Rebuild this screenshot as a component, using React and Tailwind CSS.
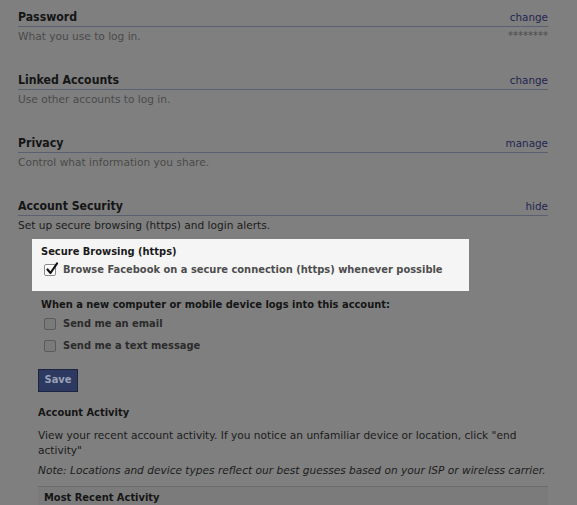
import React from 'react';

const BOLD = { fontFamily: '"DejaVu Sans Condensed", "DejaVu Sans", sans-serif' };

const sections = [
  { title: 'Password', action: 'change', desc: 'What you use to log in.', extra: '********' },
  { title: 'Linked Accounts', action: 'change', desc: 'Use other accounts to log in.' },
  { title: 'Privacy', action: 'manage', desc: 'Control what information you share.' },
];

const SectionHeader = ({ title, action }) => (
  <div className="flex h-[27px] items-end justify-between border-b border-[#5b6070] leading-[18px]">
    <span className="text-[12.2px] font-bold text-[#151515]" style={BOLD}>{title}</span>
    <span className="text-[10.4px] text-[#1f2550]">{action}</span>
  </div>
);

const Box = ({ checked, light }) => (
  <span
    className={`relative inline-block h-[12px] w-[12px] shrink-0 rounded-[2px] border ${
      light ? 'border-[#8a8a8a] bg-[#fdfdfd]' : 'border-[#5a5a5a] bg-[#7a7a7a]'
    }`}
  >
    {checked && (
      <svg viewBox="0 0 14 14" className="absolute left-[0px] top-[-3px] h-[14px] w-[14px]">
        <path d="M2.5 7.5 L5.5 11 L12 1.5" fill="none" stroke="#111" strokeWidth="2.2" strokeLinecap="round" strokeLinejoin="round" />
      </svg>
    )}
  </span>
);

const App = () => {
  return (
    <div
      className="h-[505px] overflow-hidden bg-[#7f7f7f] pl-[18px] pr-[29px] text-[10.6px]"
      style={{ fontFamily: '"DejaVu Sans", sans-serif' }}
    >
      {sections.map((s) => (
        <div key={s.title} className="h-[63px]">
          <SectionHeader title={s.title} action={s.action} />
          <div className="mt-[2px] flex justify-between leading-[14px]">
            <span className="text-[#4a4a4a]">{s.desc}</span>
            {s.extra && <span className="text-[10px] text-[#4a4a4a]">{s.extra}</span>}
          </div>
        </div>
      ))}

      <SectionHeader title="Account Security" action="hide" />
      <div className="mt-[2px] leading-[14px] text-[#1c1c1c]">Set up secure browsing (https) and login alerts.</div>

      <div className="ml-[14px] mt-[7px] h-[52px] w-[437px] bg-[#f5f5f5] pl-[9px] pt-[5px]" style={BOLD}>
        <div className="text-[11px] font-bold leading-[15px] text-[#1a1a1a]">Secure Browsing (https)</div>
        <label className="mt-[4px] flex items-center gap-[7px] pl-[3px]">
          <Box checked light />
          <span className="text-[11px] font-bold leading-[14px] text-[#4d4d4d]">
            Browse Facebook on a secure connection (https) whenever possible
          </span>
        </label>
      </div>

      <div className="ml-[23px] mt-[6px]" style={BOLD}>
        <div className="text-[11px] font-bold leading-[15px] text-[#151515]">
          When a new computer or mobile device logs into this account:
        </div>
        <label className="mt-[5px] flex items-center gap-[7px] pl-[3px]">
          <Box />
          <span className="text-[11px] font-bold leading-[14px] text-[#2b2b2b]">Send me an email</span>
        </label>
        <label className="mt-[8px] flex items-center gap-[7px] pl-[3px]">
          <Box />
          <span className="text-[11px] font-bold leading-[14px] text-[#2b2b2b]">Send me a text message</span>
        </label>
      </div>

      <div className="ml-[20px] mt-[16px]">
        <button
          className="h-[23px] w-[40px] border border-[#1c2442] bg-[#2d3960] text-[11px] font-bold text-[#9aa1b8]"
          style={BOLD}
        >
          Save
        </button>

        <div className="mt-[13px] text-[11px] font-bold leading-[15px] text-[#151515]" style={BOLD}>
          Account Activity
        </div>
        <p className="mt-[8px] leading-[15px] text-[#1c1c1c]">
          View your recent account activity. If you notice an unfamiliar device or location, click "end
          activity"
        </p>
        <p className="mt-[5px] whitespace-nowrap italic leading-[15px] text-[#1c1c1c]">
          Note: Locations and device types reflect our best guesses based on your ISP or wireless carrier.
        </p>
        <div className="mt-[8px] h-[40px] border-t border-[#6c6c6c] bg-[#7b7b7b] pl-[6px] pt-[3px]">
          <span className="text-[11px] font-bold leading-[15px] text-[#151515]" style={BOLD}>
            Most Recent Activity
          </span>
        </div>
      </div>
    </div>
  );
};

export default App;
